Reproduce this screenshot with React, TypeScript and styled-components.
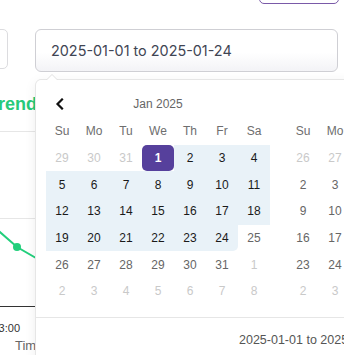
import React from 'react';
import styled, { createGlobalStyle, css } from 'styled-components';

const GlobalStyle = createGlobalStyle`
  html, body { margin: 0; padding: 0; background: #ffffff; overflow: hidden; }
  body { font-family: "Liberation Sans", Arial, sans-serif; }
  * { box-sizing: border-box; }
`;

const Page = styled.div`
  width: 344px;
  height: 355px;
  overflow: hidden;
  position: relative;
`;

const TopBar = styled.div`
  height: 4px;
  display: flex;
  justify-content: flex-end;
  align-items: flex-end;
  padding-right: 5px;
`;

const GhostButton = styled.button`
  flex-shrink: 0;
  width: 80px;
  height: 34px;
  border: 1px solid #7a5aa8;
  border-radius: 5px;
  background: #ffffff;
`;

const FilterRow = styled.div`
  margin-top: 25px;
  display: flex;
  align-items: flex-start;
  gap: 27px;
`;

const SelectBox = styled.div`
  flex-shrink: 0;
  width: 60px;
  height: 40px;
  margin-left: -52px;
  border: 1px solid #dcdcdf;
  border-radius: 5px;
  background: #ffffff;
`;

const DateField = styled.div`
  position: relative;
  width: 303px;
  flex-shrink: 0;
`;

const DateInput = styled.div`
  height: 43px;
  display: flex;
  align-items: center;
  padding-left: 15px;
  border: 1px solid #cfcfd4;
  border-radius: 6px;
  background: linear-gradient(180deg, #ffffff 55%, #f3f3f6 100%);
  font-family: Inter, "Liberation Sans", sans-serif;
  font-size: 14.4px;
  color: #3f4553;
`;

const Popup = styled.div`
  position: absolute;
  top: calc(100% + 8px);
  left: 1px;
  width: 485px;
  z-index: 10;
  background: #ffffff;
  border-radius: 5px;
  box-shadow: 1px 0 0 #e6e6e6, -1px 0 0 #e6e6e6, 0 1px 0 #e6e6e6, 0 -1px 0 #e6e6e6,
    0 3px 13px rgba(0, 0, 0, 0.08);

  &::before,
  &::after {
    content: '';
    position: absolute;
    border: solid transparent;
    height: 0;
    width: 0;
    bottom: 100%;
  }
  &::before {
    left: 10px;
    border-width: 6px;
    border-bottom-color: #e0e0e0;
  }
  &::after {
    left: 11px;
    border-width: 5px;
    border-bottom-color: #ffffff;
  }
`;

const Months = styled.div`
  display: flex;
  gap: 17px;
  padding: 10px 10px 0;
`;

const Month = styled.div`
  width: 224px;
  flex-shrink: 0;
`;

const MonthHeader = styled.div`
  height: 28px;
  display: grid;
  grid-template-columns: 28px 1fr 28px;
  align-items: center;
`;

const NavArrow = styled.span`
  display: flex;
  justify-content: center;
  align-items: center;
  color: #111;
`;

const MonthTitle = styled.span`
  text-align: center;
  font-size: 12px;
  color: #666;
`;

const DayGrid = styled.div`
  display: grid;
  grid-template-columns: repeat(7, 32px);
  grid-auto-rows: 26.67px;
`;

const Weekday = styled.span`
  display: flex;
  align-items: center;
  justify-content: center;
  font-size: 12px;
  color: #6e6e6e;
`;

type Variant = 'other' | 'normal' | 'range' | 'start' | 'end';

const variantStyles: Record<Variant, ReturnType<typeof css>> = {
  other: css`color: #c9c9c9;`,
  normal: css`color: #666666;`,
  range: css`
    color: #1a1a1a;
    background: #e9f2f8;
  `,
  start: css`
    color: #ffffff;
    font-weight: 700;
    background: #56409c;
    border-radius: 5px;
  `,
  end: css`
    color: #1a1a1a;
    background: #e9f2f8;
    border-radius: 0 0 5px 0;
  `,
};

const Day = styled.span<{ $variant: Variant }>`
  display: flex;
  align-items: center;
  justify-content: center;
  font-size: 12px;
  ${(p) => variantStyles[p.$variant]}
`;

const Footer = styled.div`
  margin-top: 12px;
  height: 45px;
  border-top: 1px solid #e6e6e6;
  display: flex;
  align-items: center;
  padding-left: 203px;
  font-size: 12.5px;
  color: #555;
`;

const ChartCard = styled.div`
  margin-left: -40px;
  width: 420px;
  padding-top: 20px;
`;

const CardTitle = styled.div`
  padding-left: 28px;
  height: 24px;
  line-height: 24px;
  font-size: 18px;
  font-weight: 700;
  color: #27c97a;
`;

const ChartSvg = styled.svg`
  display: block;
`;

const WEEKDAYS = ['Su', 'Mo', 'Tu', 'We', 'Th', 'Fr', 'Sa'];

type Cell = { day: number; variant: Variant };

function buildMonth(year: number, month: number): Cell[] {
  const first = new Date(year, month, 1).getDay();
  const daysIn = new Date(year, month + 1, 0).getDate();
  const prevDays = new Date(year, month, 0).getDate();
  const cells: Cell[] = [];
  for (let i = first - 1; i >= 0; i--) cells.push({ day: prevDays - i, variant: 'other' });
  for (let d = 1; d <= daysIn; d++) {
    let variant: Variant = 'normal';
    if (year === 2025 && month === 0) {
      if (d === 1) variant = 'start';
      else if (d === 24) variant = 'end';
      else if (d < 24) variant = 'range';
    }
    cells.push({ day: d, variant });
  }
  let n = 1;
  while (cells.length < 42) cells.push({ day: n++, variant: 'other' });
  return cells;
}

const MONTHS = [
  { title: 'Jan 2025', cells: buildMonth(2025, 0), prev: true },
  { title: 'Feb 2025', cells: buildMonth(2025, 1), prev: false },
];

const ChevronLeft = () => (
  <svg width="10" height="12" viewBox="0 0 10 12">
    <path d="M7 1.5 L2.5 6 L7 10.5" fill="none" stroke="#111" strokeWidth="2.2" strokeLinecap="square" />
  </svg>
);

export default function App() {
  return (
    <>
      <GlobalStyle />
      <Page>
        <TopBar>
          <GhostButton aria-label="action" />
        </TopBar>
        <FilterRow>
          <SelectBox />
          <DateField>
            <DateInput>2025-01-01 to 2025-01-24</DateInput>
            <Popup>
              <Months>
                {MONTHS.map((m) => (
                  <Month key={m.title}>
                    <MonthHeader>
                      <NavArrow>{m.prev ? <ChevronLeft /> : null}</NavArrow>
                      <MonthTitle>{m.title}</MonthTitle>
                      <NavArrow />
                    </MonthHeader>
                    <DayGrid>
                      {WEEKDAYS.map((w) => (
                        <Weekday key={w}>{w}</Weekday>
                      ))}
                      {m.cells.map((c, i) => (
                        <Day key={i} $variant={c.variant}>
                          {c.day}
                        </Day>
                      ))}
                    </DayGrid>
                  </Month>
                ))}
              </Months>
              <Footer>2025-01-01 to 2025-01-24</Footer>
            </Popup>
          </DateField>
        </FilterRow>
        <ChartCard>
          <CardTitle>Trend</CardTitle>
          <ChartSvg width="420" height="260" viewBox="0 0 420 260">
            <line x1="0" y1="15.5" x2="420" y2="15.5" stroke="#e6e6e6" />
            <line x1="0" y1="102.5" x2="420" y2="102.5" stroke="#e6e6e6" />
            <polyline
              points="0,81 57,131 120,167.5"
              fill="none"
              stroke="#22cf7c"
              strokeWidth="2"
            />
            <circle cx="57" cy="131" r="4" fill="#22cf7c" />
            <line x1="0" y1="190.5" x2="420" y2="190.5" stroke="#333" />
            <text x="60" y="216" textAnchor="end" fontSize="11" fill="#333" fontFamily="Liberation Sans, Arial, sans-serif">
              03:00
            </text>
            <text x="55" y="234" fontSize="13" fill="#666" fontFamily="Liberation Sans, Arial, sans-serif">
              Time
            </text>
          </ChartSvg>
        </ChartCard>
      </Page>
    </>
  );
}
